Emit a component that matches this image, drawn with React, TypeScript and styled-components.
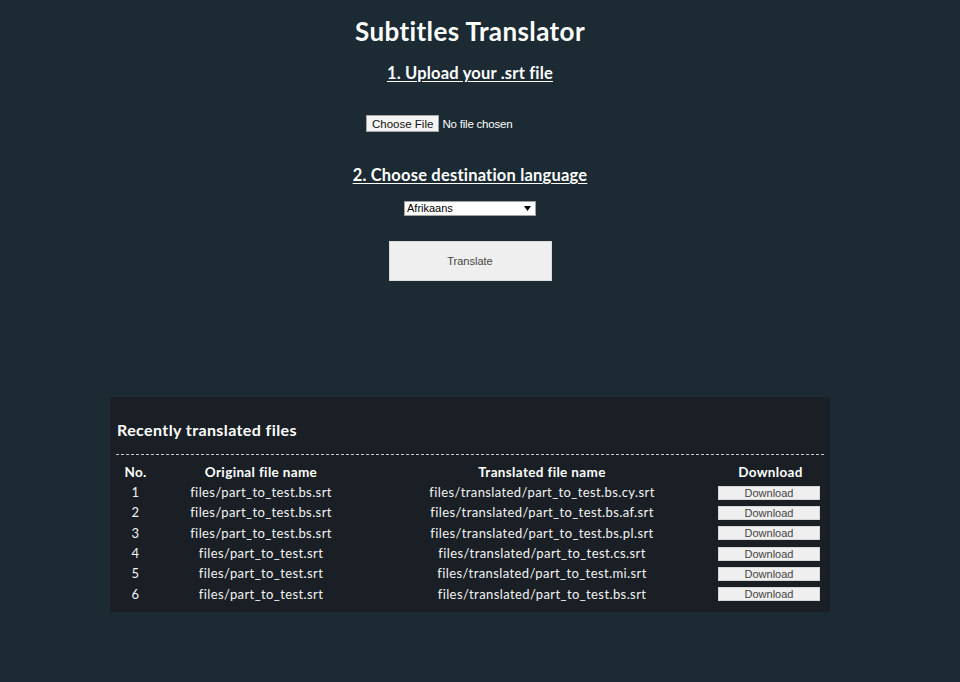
import React from "react";
import styled, { createGlobalStyle } from "styled-components";

const GlobalStyle = createGlobalStyle`
  html, body {
    margin: 0;
    padding: 0;
    background: #1b2a33;
  }
  body {
    font-family: "Lato", "DejaVu Sans", sans-serif;
    color: #ffffff;
  }
`;

const Page = styled.div`
  width: 940px;
  min-height: 682px;
  display: flex;
  flex-direction: column;
  align-items: center;
  padding-top: 15px;
  box-sizing: border-box;
`;

const Title = styled.h1`
  margin: 0;
  font-size: 26px;
  line-height: 32px;
  font-weight: 700;
  letter-spacing: 0.4px;
  color: #ffffff;
`;

const StepHeading = styled.h2<{ $top: number }>`
  margin: ${(p) => p.$top}px 0 0;
  font-size: 16.5px;
  line-height: 20px;
  font-weight: 700;
  letter-spacing: 0.2px;
  text-decoration: underline;
  text-underline-offset: 2px;
  color: #ffffff;
`;

const FileRow = styled.div`
  margin-top: 32px;
  width: 208px;
  display: flex;
  align-items: center;
  justify-content: flex-start;
  gap: 3px;
  font-family: "Liberation Sans", Arial, sans-serif;
  font-size: 11.5px;
`;

const FileButton = styled.button`
  height: 17px;
  padding: 0 5px;
  background: #f4f4f4;
  border: 1px solid #a8a8a8;
  border-radius: 0;
  font-family: "Liberation Sans", Arial, sans-serif;
  font-size: 11.5px;
  color: #111;
  line-height: 14px;
`;

const FileStatus = styled.span`
  color: #ffffff;
  letter-spacing: -0.2px;
`;

const SelectWrap = styled.div`
  margin-top: 16px;
  position: relative;
  width: 132px;
  height: 15px;
`;

const Select = styled.select`
  appearance: none;
  display: block;
  width: 132px;
  height: 15px;
  padding: 0 0 0 2px;
  margin: 0;
  background: #ffffff;
  border: 1px solid #a0a0a0;
  border-radius: 0;
  font-family: "Liberation Sans", Arial, sans-serif;
  font-size: 11px;
  line-height: 13px;
  color: #000;
  box-sizing: border-box;
`;

const Arrow = styled.svg`
  position: absolute;
  right: 5px;
  top: 5px;
  width: 7px;
  height: 5px;
  pointer-events: none;
`;

const TranslateButton = styled.button`
  margin-top: 25px;
  width: 163px;
  height: 40px;
  background: #efefef;
  border: 1px solid #dcdcdc;
  font-family: "Liberation Sans", Arial, sans-serif;
  font-size: 11px;
  color: #444;
`;

const Panel = styled.section`
  margin-top: 116px;
  width: 720px;
  background: #191f24;
  padding: 21px 6px 8px;
  box-sizing: border-box;
`;

const PanelTitle = styled.h3`
  margin: 0 0 0 1px;
  font-size: 16px;
  line-height: 24px;
  font-weight: 700;
  letter-spacing: 0.4px;
`;

const Divider = styled.hr`
  margin: 12px 0 7px;
  border: 0;
  border-top: 1px dashed #c8c8c8;
  height: 0;
`;

const Table = styled.table`
  width: 100%;
  border-collapse: collapse;
  table-layout: fixed;
  font-size: 13px;
`;

const Th = styled.th<{ $w: number }>`
  width: ${(p) => p.$w}px;
  height: 20px;
  padding: 0;
  text-align: center;
  font-weight: 700;
  font-size: 13.5px;
  letter-spacing: 0.35px;
`;

const Td = styled.td`
  height: 20.3px;
  padding: 0;
  text-align: center;
  color: #f4f4f4;
  white-space: nowrap;
  letter-spacing: 0.4px;
`;

const DownloadButton = styled.button`
  width: 102px;
  height: 14px;
  padding: 0;
  margin: 1px 0 0 1px;
  display: block;
  background: #efefef;
  border: 1px solid #d6d6d6;
  font-family: "Liberation Sans", Arial, sans-serif;
  font-size: 11px;
  line-height: 12px;
  color: #444;
`;

const rows = [
  ["1", "files/part_to_test.bs.srt", "files/translated/part_to_test.bs.cy.srt"],
  ["2", "files/part_to_test.bs.srt", "files/translated/part_to_test.bs.af.srt"],
  ["3", "files/part_to_test.bs.srt", "files/translated/part_to_test.bs.pl.srt"],
  ["4", "files/part_to_test.srt", "files/translated/part_to_test.cs.srt"],
  ["5", "files/part_to_test.srt", "files/translated/part_to_test.mi.srt"],
  ["6", "files/part_to_test.srt", "files/translated/part_to_test.bs.srt"],
];

export default function App() {
  return (
    <>
      <GlobalStyle />
      <Page>
        <Title>Subtitles Translator</Title>
        <StepHeading $top={16}>1. Upload your .srt file</StepHeading>
        <FileRow>
          <FileButton type="button">Choose File</FileButton>
          <FileStatus>No file chosen</FileStatus>
        </FileRow>
        <StepHeading $top={33}>2. Choose destination language</StepHeading>
        <SelectWrap>
          <Select defaultValue="af">
            <option value="af">Afrikaans</option>
          </Select>
          <Arrow viewBox="0 0 7 5">
            <path d="M0 0 H7 L3.5 5 Z" fill="#000" />
          </Arrow>
        </SelectWrap>
        <TranslateButton type="button">Translate</TranslateButton>
        <Panel>
          <PanelTitle>Recently translated files</PanelTitle>
          <Divider />
          <Table>
            <thead>
              <tr>
                <Th $w={39}>No.</Th>
                <Th $w={212}>Original file name</Th>
                <Th $w={350}>Translated file name</Th>
                <Th $w={107}>Download</Th>
              </tr>
            </thead>
            <tbody>
              {rows.map((r) => (
                <tr key={r[0]}>
                  <Td>{r[0]}</Td>
                  <Td>{r[1]}</Td>
                  <Td>{r[2]}</Td>
                  <Td>
                    <DownloadButton type="button">Download</DownloadButton>
                  </Td>
                </tr>
              ))}
            </tbody>
          </Table>
        </Panel>
      </Page>
    </>
  );
}
